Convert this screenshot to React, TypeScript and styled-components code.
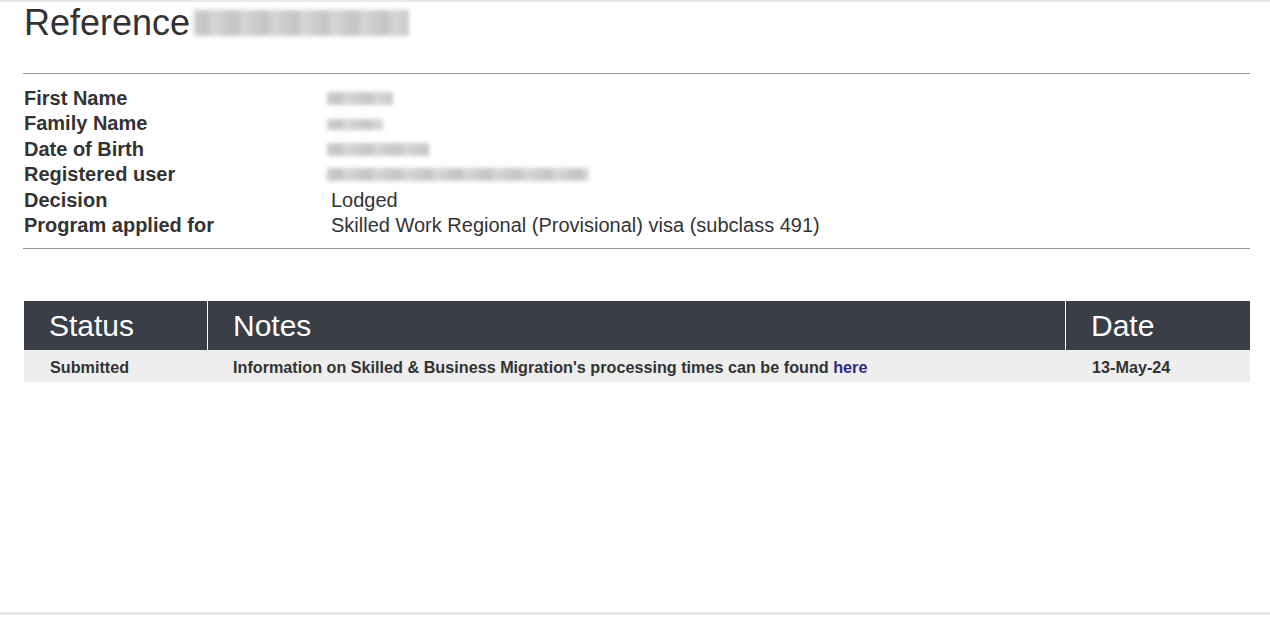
import React from 'react';
import styled, { createGlobalStyle } from 'styled-components';

const GlobalStyle = createGlobalStyle`
  html, body {
    margin: 0;
    padding: 0;
    background: #ffffff;
    font-family: "Liberation Sans", Arial, sans-serif;
    color: #333333;
  }
`;

const Page = styled.div`
  box-sizing: border-box;
  height: 615px;
  border-top: 2px solid #e8e8e8;
  border-bottom: 3px solid #e6e6e6;
  padding: 0 20px 0 23px;
`;

const Title = styled.h1`
  margin: 0;
  padding: 1px 0 0 1px;
  font-size: 36px;
  line-height: 40px;
  font-weight: normal;
  color: #333333;
  display: flex;
  align-items: center;
  gap: 8px;
`;

const Divider = styled.hr<{ $top: number }>`
  margin: ${(p) => p.$top}px 0 0 0;
  border: 0;
  border-top: 1px solid #9a9a9a;
  height: 0;
`;

const Details = styled.dl`
  margin: 12px 0 0 0;
  padding-left: 1px;
  display: grid;
  grid-template-columns: 307px 1fr;
  font-size: 20px;
  line-height: 25.4px;
`;

const Label = styled.dt`
  font-weight: bold;
  color: #333333;
`;

const Value = styled.dd`
  margin: 0;
  color: #333333;
  display: flex;
  align-items: center;
`;

const Redacted = styled.span<{ $w: number; $h?: number }>`
  display: inline-block;
  width: ${(p) => p.$w}px;
  height: ${(p) => p.$h ?? 13}px;
  margin-left: -4px;
  background: repeating-linear-gradient(
    90deg,
    #c4c4c4 0px,
    #b9bbbd 12px,
    #d0d0d0 20px,
    #c2c4c6 30px
  );
  filter: blur(2px);
  opacity: 0.85;
`;

const Table = styled.div`
  margin-top: 52px;
  margin-left: 1px;
  display: grid;
  grid-template-columns: 183px 1fr 185px;
`;

const HeadCell = styled.div<{ $sep?: boolean }>`
  background: #3a3e47;
  color: #ffffff;
  font-size: 30px;
  height: 49px;
  line-height: 49px;
  padding-left: 25px;
  border-left: ${(p) => (p.$sep ? '1px solid #ffffff' : '0')};
`;

const BodyCell = styled.div<{ $sep?: boolean; $pad?: number }>`
  box-sizing: border-box;
  background: #eeeeee;
  color: #333333;
  font-size: 16.2px;
  font-weight: bold;
  height: 32px;
  line-height: 32px;
  padding: 1px 0 0 ${(p) => p.$pad ?? 26}px;
  border-left: ${(p) => (p.$sep ? '1px solid #eeeeee' : '0')};
`;

const Link = styled.a`
  color: #2e2c80;
  text-decoration: none;
`;

export default function App() {
  return (
    <>
      <GlobalStyle />
      <Page>
        <Title>
          Reference
          <Redacted $w={215} $h={26} />
        </Title>
        <Divider $top={30} />
        <Details>
          <Label>First Name</Label>
          <Value><Redacted $w={66} /></Value>
          <Label>Family Name</Label>
          <Value><Redacted $w={56} $h={11} /></Value>
          <Label>Date of Birth</Label>
          <Value><Redacted $w={102} /></Value>
          <Label>Registered user</Label>
          <Value><Redacted $w={262} /></Value>
          <Label>Decision</Label>
          <Value>Lodged</Value>
          <Label>Program applied for</Label>
          <Value>Skilled Work Regional (Provisional) visa (subclass 491)</Value>
        </Details>
        <Divider $top={10} />
        <Table>
          <HeadCell>Status</HeadCell>
          <HeadCell $sep>Notes</HeadCell>
          <HeadCell $sep>Date</HeadCell>
          <BodyCell>Submitted</BodyCell>
          <BodyCell $sep $pad={25}>
            Information on Skilled &amp; Business Migration's processing times can be found{' '}
            <Link href="#">here</Link>
          </BodyCell>
          <BodyCell $sep $pad={26}>13-May-24</BodyCell>
        </Table>
      </Page>
    </>
  );
}
